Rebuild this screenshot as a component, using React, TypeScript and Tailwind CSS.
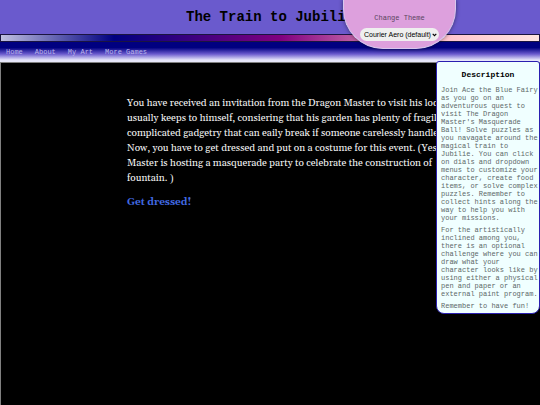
const navLinks = ['Home', 'About', 'My Art', 'More Games']

const themes = ['Courier Aero (default)', 'Dragon Night', 'Plain']

const storyLines = [
  'You have received an invitation from the Dragon Master to visit his lodge',
  'usually keeps to himself, consiering that his garden has plenty of fragile',
  'complicated gadgetry that can eaily break if someone carelessly handles',
  'Now, you have to get dressed and put on a costume for this event. (Yes,',
  'Master is hosting a masquerade party to celebrate the construction of',
  'fountain. )',
]

const description = [
  "Join Ace the Blue Fairy as you go on an adventurous quest to visit The Dragon Master's Masquerade Ball! Solve puzzles as you navagate around the magical train to Jubilie. You can click on dials and dropdown menus to customize your character, create food items, or solve complex puzzles. Remember to collect hints along the way to help you with your missions.",
  'For the artistically inclined among you, there is an optional challenge where you can draw what your character looks like by using either a physical pen and paper or an external paint program.',
  'Remember to have fun!',
]

function ThemePicker() {
  return (
    <div className="absolute top-0 right-[84px] z-20 flex h-[49px] w-[113px] flex-col items-center rounded-b-[40px] border border-t-0 border-[#d8c8ee] bg-[#dda0dd] pt-[14px] shadow-[0_0_4px_#00000080]">
      <label htmlFor="theme" className="text-[7px] leading-[8px] text-[#5a4560]">
        Change Theme
      </label>
      <div className="relative mt-[6px]">
        <select
          id="theme"
          className="block h-[13px] w-[79px] appearance-none rounded-full bg-[#efefef] pl-[4px] font-['Liberation_Sans',Arial,sans-serif] text-[7px] leading-[13px] text-black"
        >
          {themes.map((theme) => (
            <option key={theme}>{theme}</option>
          ))}
        </select>
        <svg viewBox="0 0 5 4" className="pointer-events-none absolute top-[5px] right-[2px] h-[4px] w-[5px]">
          <path d="M0.7 0.8 L2.5 2.7 L4.3 0.8" fill="none" stroke="#000" strokeWidth="1.1" />
        </svg>
      </div>
    </div>
  )
}

export default function App() {
  return (
    <div className="relative flex min-h-screen flex-col overflow-hidden bg-black font-['Courier_New','Liberation_Mono',monospace]">
      <header className="bg-[#6a5acd]">
        <h1 className="pt-[9px] pb-[9px] text-center text-[14px] leading-[16px] font-bold text-black">
          The Train to Jubilie
        </h1>
        <div className="h-[8px] border border-[#1a1440] bg-[linear-gradient(to_right,#c0c0e0,#000080_21%,#800080_52%,#ffc0cb_80%,#ffe4e1)]" />
      </header>

      <nav className="flex h-[21px] items-center gap-[12px] border-b border-[#808080] bg-[linear-gradient(to_bottom,#000080_28%,#6a5acd_60%,#e6e6fa_90%)] px-[6px]">
        {navLinks.map((link) => (
          <a key={link} href="#" className="text-[7px] leading-[8px] text-[#bcb6ec]">
            {link}
          </a>
        ))}
      </nav>

      <main className="flex-1 border-l border-[#808080] pt-[33px] pl-[126px] font-[Georgia,Gelasio,'Liberation_Serif',serif] text-[10px] leading-[15px] text-[#f5f5f5]">
        <p className="whitespace-nowrap">
          {storyLines.map((line) => (
            <span key={line} className="block">
              {line}
            </span>
          ))}
        </p>
        <a href="#" className="mt-[9px] inline-block font-bold text-[#4169e1]">
          Get dressed!
        </a>
      </main>

      <ThemePicker />

      <aside className="absolute top-[61px] right-0 z-10 w-[104px] rounded-[3px] rounded-b-[8px] border border-[#2a1fb0] bg-[#f0ffff] pt-[8px] pb-[3px] pl-[4px]">
        <h2 className="mb-[7px] pr-[4px] text-center text-[8px] leading-[9px] font-bold text-black">Description</h2>
        <div className="space-y-[4px] text-[7px] leading-[8px] text-[#5c6868]">
          {description.map((text) => (
            <p key={text}>{text}</p>
          ))}
        </div>
      </aside>
    </div>
  )
}
